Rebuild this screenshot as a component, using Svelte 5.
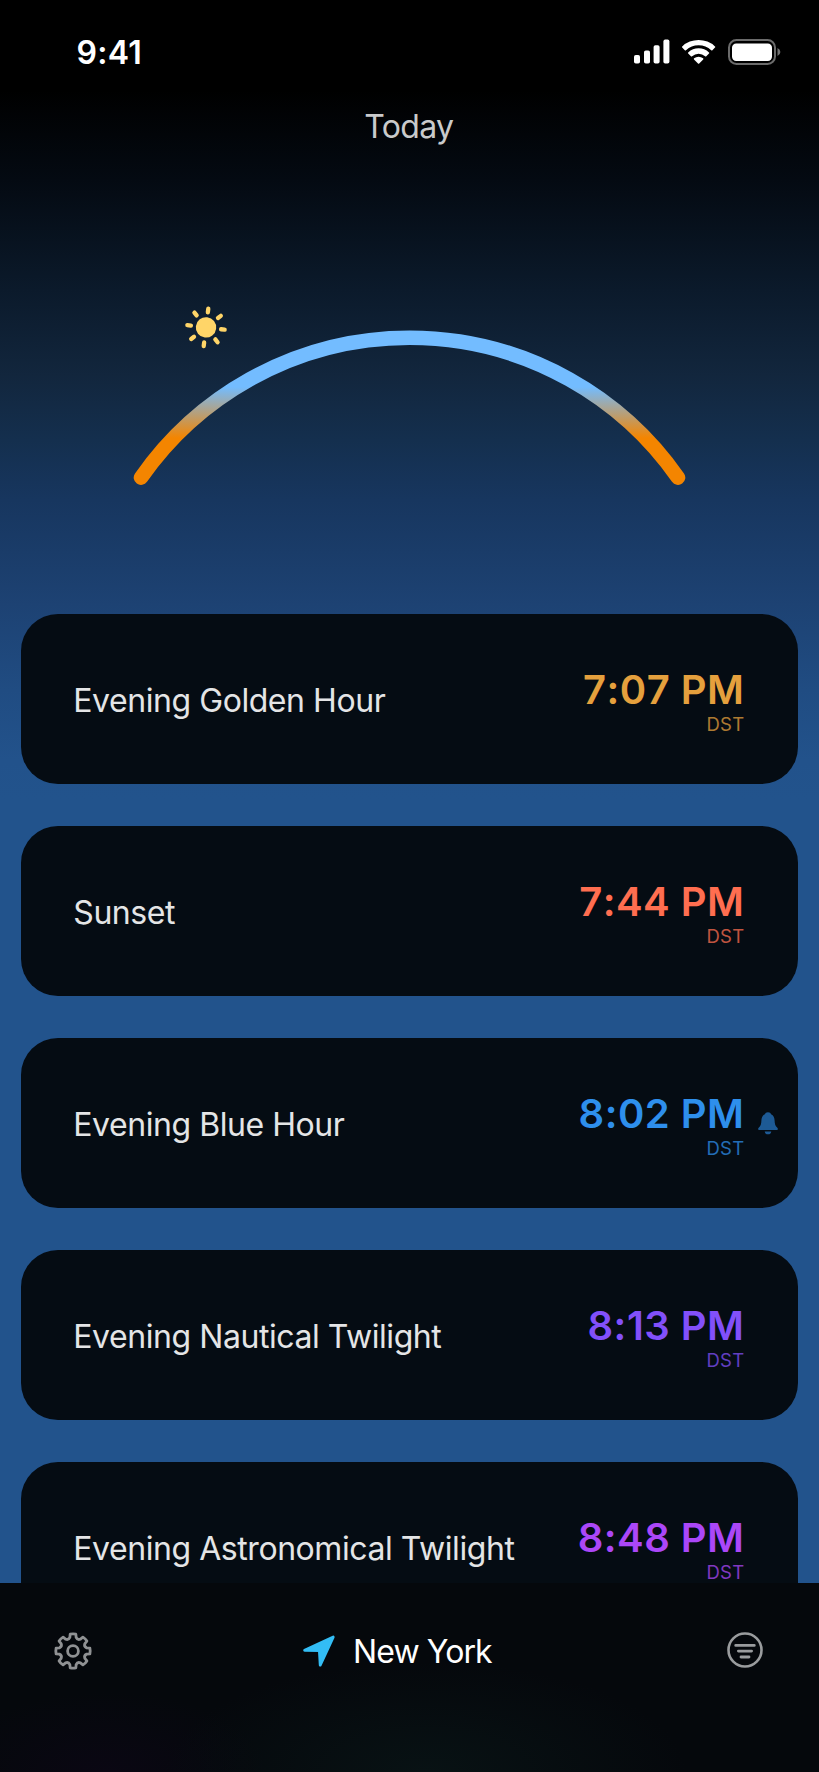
<script lang="ts">
  type SunEvent = {
    name: string;
    time: string;
    tone: string;
    alert?: boolean;
  };

  const events: SunEvent[] = [
    { name: 'Evening Golden Hour', time: '7:07 PM', tone: 'golden' },
    { name: 'Sunset', time: '7:44 PM', tone: 'sunset' },
    { name: 'Evening Blue Hour', time: '8:02 PM', tone: 'blue', alert: true },
    { name: 'Evening Nautical Twilight', time: '8:13 PM', tone: 'nautical' },
    { name: 'Evening Astronomical Twilight', time: '8:48 PM', tone: 'astro' },
  ];

  const rays = [0, 45, 90, 135, 180, 225, 270, 315];

  function polar(r: number, deg: number) {
    const a = (deg * Math.PI) / 180;
    return `${(20 + r * Math.sin(a)).toFixed(2)} ${(20 - r * Math.cos(a)).toFixed(2)}`;
  }

  // eight teeth with rounded valleys between them
  function gearPath() {
    let d = '';
    for (let i = 0; i < 8; i++) {
      const a = i * 45;
      d += `${i ? 'L' : 'M'}${polar(14, a - 13)} L${polar(17.1, a - 9.5)}`;
      d += ` Q${polar(17.5, a)} ${polar(17.1, a + 9.5)} L${polar(14, a + 13)}`;
      d += ` Q${polar(11.6, a + 22.5)} ${polar(14, a + 32)} `;
    }
    return d + 'Z';
  }
</script>

<div class="screen">
  <header class="status">
    <span class="clock">9:41</span>
    <div class="indicators">
      <svg width="36" height="26" viewBox="0 0 36 26" fill="#fff">
        <rect x="0" y="16" width="6" height="8.5" rx="1.8" />
        <rect x="10" y="11.5" width="6" height="13" rx="1.8" />
        <rect x="19.6" y="6.3" width="6" height="18.2" rx="1.8" />
        <rect x="29.4" y="0.6" width="6" height="23.9" rx="1.8" />
      </svg>
      <svg class="wifi" width="36" height="26" viewBox="0 0 36 26" fill="#fff">
        <path d="M1.2 8.6 Q0.6 8 1.2 7.4 A24 24 0 0 1 34 7.4 Q34.6 8 34 8.6 L31.4 11.2 Q30.8 11.8 30.2 11.2 A18.2 18.2 0 0 0 5 11.2 Q4.4 11.8 3.8 11.2 Z" />
        <path d="M7.2 14.6 Q6.6 14 7.2 13.4 A15.4 15.4 0 0 1 28 13.4 Q28.6 14 28 14.6 L25.3 17.3 Q24.7 17.8 24.1 17.3 A9.6 9.6 0 0 0 11.1 17.3 Q10.5 17.8 9.9 17.3 Z" />
        <path d="M13 20.4 Q12.5 19.8 13.1 19.3 A7 7 0 0 1 22.1 19.3 Q22.7 19.8 22.2 20.4 L18.2 24.4 Q17.6 25 17 24.4 Z" />
      </svg>
      <svg width="53" height="26" viewBox="0 0 53 26">
        <rect x="1" y="1" width="46" height="24" rx="7.5" fill="none" stroke="#fff" stroke-opacity="0.42" stroke-width="2" />
        <rect x="4" y="4.5" width="40" height="17.5" rx="4.2" fill="#fff" />
        <path d="M49.5 9 Q52.4 10.4 52.4 13 Q52.4 15.6 49.5 17 Z" fill="#fff" fill-opacity="0.45" />
      </svg>
    </div>
  </header>

  <h1>Today</h1>

  <svg class="sky" viewBox="0 0 819 474" width="819" height="474">
    <defs>
      <linearGradient id="arc" gradientUnits="userSpaceOnUse" x1="0" y1="247" x2="0" y2="298">
        <stop offset="0" stop-color="#73bcff" />
        <stop offset="1" stop-color="#f48500" />
      </linearGradient>
    </defs>
    <path d="M141 337.6 A327.7 327.7 0 0 1 678 337.6" fill="none" stroke="url(#arc)" stroke-width="14.6" stroke-linecap="round" />
    <g transform="translate(206 187.4) rotate(7)" fill="#ffd568" stroke="#ffd568">
      <circle r="10.2" stroke="none" />
      {#each rays as angle}
        <path d="M0 -15.2 V-18.8" transform="rotate({angle})" stroke-width="4.3" stroke-linecap="round" />
      {/each}
    </g>
  </svg>

  <main>
    {#each events as event}
      <article class={event.tone}>
        <h2>{event.name}</h2>
        <div class="when">
          <span class="time">{event.time}</span>
          <span class="zone">DST</span>
        </div>
        {#if event.alert}
          <svg class="bell" width="20" height="23" viewBox="0 0 20 23" fill="currentColor">
            <path d="M10 0.3 C8.3 0.3 7.3 1.2 6.9 2.2 C4.5 3.2 3.5 5.6 3.4 8.4 C3.3 12 2.7 13.6 0.9 15.4 C-0.4 16.7 0 18 1.6 18 H18.4 C20 18 20.4 16.7 19.1 15.4 C17.3 13.6 16.7 12 16.6 8.4 C16.5 5.6 15.5 3.2 13.1 2.2 C12.7 1.2 11.7 0.3 10 0.3 Z" />
            <path d="M6.7 19.4 H13.3 C13 21.3 11.8 22.3 10 22.3 C8.2 22.3 7 21.3 6.7 19.4 Z" />
          </svg>
        {/if}
      </article>
    {/each}
  </main>

  <footer>
    <svg class="gear" width="40" height="40" viewBox="0 0 40 40" fill="none" stroke="#8f9193" stroke-width="2.8" stroke-linejoin="round">
      <path d={gearPath()} />
      <circle cx="20" cy="20" r="5.4" />
    </svg>
    <div class="place">
      <svg width="32" height="32" viewBox="0 0 34 34" fill="#33bdf5" stroke="#33bdf5" stroke-width="3" stroke-linejoin="round">
        <path d="M1.7 16.2 L32.1 2.2 L18.3 32 L17.4 16.6 Z" />
      </svg>
      <span>New York</span>
    </div>
    <svg class="filter" width="36" height="36" viewBox="0 0 36 36" fill="none" stroke="#9a9c9e" stroke-linecap="round">
      <circle cx="18" cy="18" r="16.5" stroke-width="2.6" />
      <path d="M8.7 13.4 H27.3 M11.4 19.1 H24.6 M14 25 H22" stroke-width="2.8" />
    </svg>
  </footer>
</div>

<style>
  :global(body) {
    background: #000;
  }

  .screen {
    width: 819px;
    height: 1772px;
    display: flex;
    flex-direction: column;
    overflow: hidden;
    font-family: Inter, 'Liberation Sans', sans-serif;
    background: linear-gradient(
      #000 0,
      #000 90px,
      #040a12 180px,
      #0b1a2b 290px,
      #12263d 375px,
      #142f4e 440px,
      #17365f 500px,
      #1d4273 604px,
      #204c82 690px,
      #22528b 760px,
      #22538c 800px
    );
  }

  .status {
    flex: none;
    height: 66px;
    padding: 0 38.5px 0 76.5px;
    display: flex;
    justify-content: space-between;
    align-items: flex-end;
    box-sizing: border-box;
  }

  .clock {
    color: #fff;
    font-size: 32px;
    font-weight: 600;
    letter-spacing: 0.3px;
    line-height: 26px;
  }

  .indicators {
    display: flex;
    padding-bottom: 1px;
  }

  .wifi {
    margin: 0 10.5px 0 11px;
  }

  h1 {
    flex: none;
    height: 40px;
    margin: 41px 0 -7px;
    color: #c9cacb;
    font-size: 32px;
    font-weight: 400;
    letter-spacing: -0.7px;
    line-height: 40px;
    text-align: center;
    text-indent: -1.4px;
  }

  .sky {
    flex: none;
    display: block;
  }

  main {
    flex: 1;
    min-height: 0;
    padding: 0 21.3px;
    display: flex;
    flex-direction: column;
    gap: 42.3px;
    overflow: hidden;
  }

  article {
    position: relative;
    flex: none;
    height: 169.7px;
    padding: 3px 53.2px 0 52px;
    display: flex;
    justify-content: space-between;
    align-items: center;
    box-sizing: border-box;
    border-radius: 37px;
    background: #050c13;
  }

  h2 {
    margin: 0;
    color: #e4e5e6;
    font-size: 32px;
    font-weight: 400;
    letter-spacing: -0.44px;
  }

  .when {
    display: flex;
    flex-direction: column;
    align-items: flex-end;
    padding-top: 5px;
  }

  .time {
    font-size: 40px;
    font-weight: 600;
    font-kerning: none;
    letter-spacing: 0.5px;
    line-height: 42px;
  }

  .zone {
    font-size: 18.5px;
    letter-spacing: 0.3px;
    line-height: 26px;
    opacity: 0.75;
  }

  .bell {
    position: absolute;
    right: 20px;
    top: 74px;
    opacity: 0.6;
  }

  .golden {
    color: #e5a03d;
  }

  .sunset {
    color: #ff6e50;
  }

  .blue {
    color: #2e8fec;
  }

  .nautical {
    color: #8250fa;
  }

  .astro {
    color: #ab47f8;
  }

  footer {
    flex: none;
    height: 189px;
    padding: 47.5px 55.5px 0 53.3px;
    display: flex;
    justify-content: space-between;
    align-items: flex-start;
    box-sizing: border-box;
    background:
      radial-gradient(ellipse 260px 110px at 52% 100%, #081214, transparent),
      radial-gradient(ellipse 160px 80px at 13% 100%, #0a0713, transparent),
      #05080c;
  }

  .place {
    display: flex;
    align-items: center;
    gap: 18px;
    margin-right: 26px;
    color: #fff;
    font-size: 32px;
    letter-spacing: -0.9px;
    line-height: 41px;
  }

  .filter {
    margin-top: 1.5px;
  }
</style>
